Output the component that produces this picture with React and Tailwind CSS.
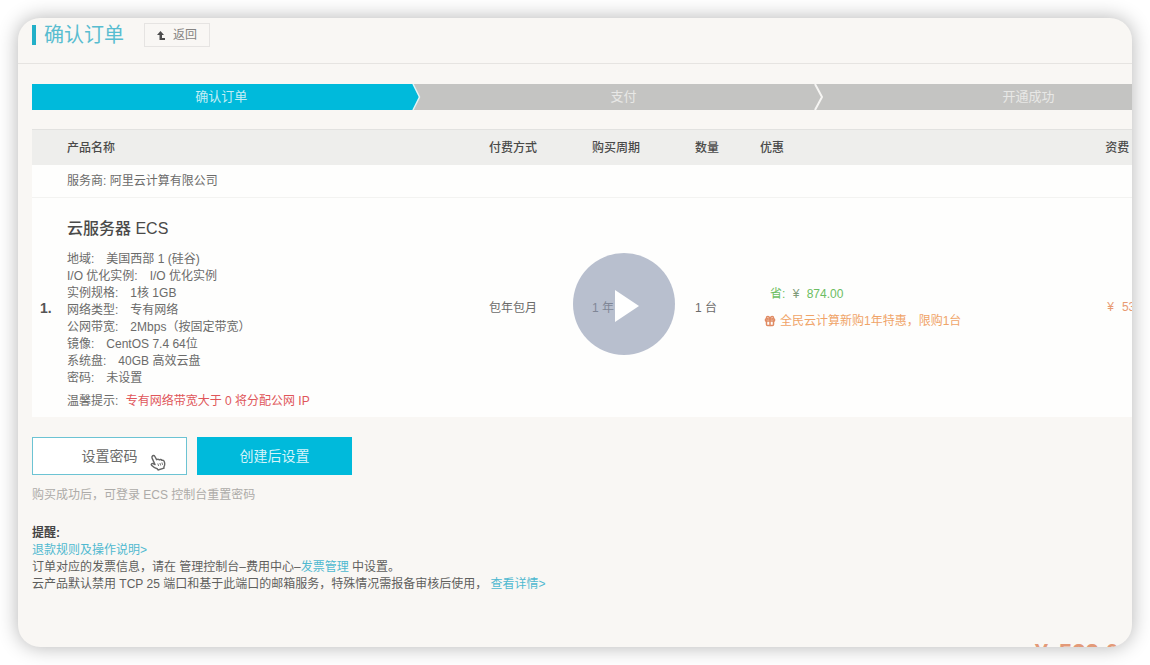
import React from "react";
import { Gift } from "lucide-react";

const details = [
  ["地域", "美国西部 1 (硅谷)"],
  ["I/O 优化实例", "I/O 优化实例"],
  ["实例规格", "1核 1GB"],
  ["网络类型", "专有网络"],
  ["公网带宽", "2Mbps（按固定带宽）"],
  ["镜像", "CentOS 7.4 64位"],
  ["系统盘", "40GB 高效云盘"],
  ["密码", "未设置"],
];

function Header() {
  return (
    <header className="flex shrink-0 items-center border-b border-[#e6e4e1] pt-[5px] pb-4 pl-[14px]">
      <span className="h-5 w-1 bg-[#22b0c8]" />
      <h1 className="ml-2 text-xl leading-6 text-[#58bdd0]">确认订单</h1>
      <button
        type="button"
        className="ml-5 flex h-6 items-center gap-2 border border-[#e6e4e2] px-3 text-[#858482]"
      >
        <svg className="h-[9px] w-2" viewBox="0 0 8 9" aria-hidden="true">
          <path d="M0 4L3.500 0L7 4H5V7H8V9H2.500V4Z" fill="#4c4c4c" />
        </svg>
        返回
      </button>
    </header>
  );
}

function Steps() {
  return (
    <ol className="mt-5 grid grid-cols-[390fr_402fr_407fr] bg-[#c4c4c2] text-[13px] leading-[26px]">
      <li className="flex text-[#c5eef6]">
        <span className="grow bg-[#00badb] text-center">确认订单</span>
        <svg className="h-[26px] w-3" viewBox="0 0 12 26" aria-hidden="true">
          <path d="M0 0H3L9 13L3 26H0Z" fill="#00badb" />
          <path d="M3 0L9.500 13L3 26" fill="none" stroke="#dff3f5" strokeWidth="1.500" />
        </svg>
      </li>
      <li className="flex pl-3 text-[#e8e8e6]">
        <span className="grow text-center">支付</span>
        <svg className="h-[26px] w-3" viewBox="0 0 12 26" aria-hidden="true">
          <path d="M2 0L9 13L2 26" fill="none" stroke="#f6f5f3" strokeWidth="2" />
        </svg>
      </li>
      <li className="text-center text-[#e8e8e6]">开通成功</li>
    </ol>
  );
}

function OrderTable() {
  return (
    <table className="mt-[19px] w-full table-fixed text-left text-[#6b6b6a]">
      <colgroup>
        <col className="w-[35px]" />
        <col className="w-[422px]" />
        <col className="w-[103px]" />
        <col className="w-[103px]" />
        <col className="w-[65px]" />
        <col />
        <col className="w-[127px]" />
      </colgroup>
      <thead className="border-t border-[#e2e2e0] bg-[#eeeeec] text-[#4a4a49]">
        <tr className="h-[35px]">
          <th scope="col" aria-label="序号" />
          <th scope="col" className="pt-[2px] font-medium">产品名称</th>
          <th scope="col" className="pt-[2px] font-medium">付费方式</th>
          <th scope="col" className="pt-[2px] font-medium">购买周期</th>
          <th scope="col" className="pt-[2px] font-medium">数量</th>
          <th scope="col" className="pt-[2px] font-medium">优惠</th>
          <th scope="col" className="pt-[2px] font-medium">资费</th>
        </tr>
      </thead>
      <tbody className="bg-[#fefefd]">
        <tr className="h-[33px] border-b border-[#f3f3f1]">
          <td />
          <td colSpan={6} className="pt-[2px]">服务商: 阿里云计算有限公司</td>
        </tr>
        <tr>
          <td className="pl-2 text-sm font-bold text-[#555]">1.</td>
          <td className="pt-[19px] pb-[7px]">
            <h2 className="text-base leading-6 font-medium text-[#4a4a49]">云服务器 ECS</h2>
            <dl className="mt-[10px]">
              {details.map(([name, value]) => (
                <div key={name} className="flex gap-3">
                  <dt>{name}:</dt>
                  <dd>{value}</dd>
                </div>
              ))}
            </dl>
            <p className="mt-[6px]">
              温馨提示: <span className="ml-1 text-[#e0565a]">专有网络带宽大于 0 将分配公网 IP</span>
            </p>
          </td>
          <td className="pt-[2px]">包年包月</td>
          <td className="pt-[2px]">1 年</td>
          <td className="pt-[2px]">1 台</td>
          <td className="leading-[27px]">
            <p className="pl-[10px] text-[#6cbd62]">
              省: <span className="mx-1 text-[#7f9a78]">¥</span> 874.00
            </p>
            <p className="flex items-center gap-1 pl-1 text-[#f0a468]">
              <Gift className="h-3 w-3 text-[#e08a62]" strokeWidth={3} />
              全民云计算新购1年特惠，限购1台
            </p>
          </td>
          <td className="text-[#e89a72]">
            <span className="mr-2 ml-[2px]">¥</span>532.00
          </td>
        </tr>
      </tbody>
    </table>
  );
}

function HandPointer() {
  return (
    <svg className="absolute top-4 right-5 h-[17px] w-4" viewBox="0 0 16 17" aria-hidden="true">
      <path
        d="M2.200 2.400C2.900 1.200 4.200 1.300 4.900 2.500L6.600 5.700C7.600 5 8.600 5.200 9.200 5.900C10.200 5.200 11.300 5.500 11.800 6.300C12.900 5.900 13.900 6.500 14.300 7.700C15 9.800 14.900 11.500 13.800 13.100L14.100 14.200L8 16L7.200 14.700C5.200 14.300 3.300 13 1.500 11.200C0.800 10.200 1.900 9.200 3 9.700L5 10.600L2.200 4.400C1.900 3.700 1.900 3 2.200 2.400Z"
        fill="#fff"
        stroke="#666"
        strokeWidth="1.400"
        strokeLinejoin="round"
      />
      <path d="M7.800 9.500L8.600 12M9.900 9L10.700 11.500M11.900 8.500L12.600 10.900" stroke="#777" strokeWidth="1" />
    </svg>
  );
}

function Actions() {
  return (
    <div className="mt-5 flex gap-[10px] text-sm">
      <button
        type="button"
        className="relative h-[38px] w-[155px] border border-[#6cc3d3] bg-white text-[#6b6b6a]"
      >
        设置密码
        <HandPointer />
      </button>
      <button type="button" className="h-[38px] w-[155px] bg-[#00badb] text-[#d5f4fa]">
        创建后设置
      </button>
    </div>
  );
}

function Notes() {
  return (
    <section className="mt-[21px] text-[#5f5f5d]">
      <h3 className="font-bold text-[#444]">提醒:</h3>
      <p>
        <a href="#refund" className="text-[#4fb9d0]">退款规则及操作说明&gt;</a>
      </p>
      <p>
        订单对应的发票信息，请在 管理控制台–费用中心–
        <a href="#invoice" className="text-[#4fb9d0]">发票管理</a> 中设置。
      </p>
      <p>
        云产品默认禁用 TCP 25 端口和基于此端口的邮箱服务，特殊情况需报备审核后使用，{" "}
        <a href="#details" className="text-[#4fb9d0]">查看详情&gt;</a>
      </p>
    </section>
  );
}

export default function App() {
  return (
    <div className="flex h-screen bg-white p-[18px] font-['Liberation_Sans','Noto_Sans_CJK_SC',sans-serif] text-xs leading-[17px]">
      <main className="relative flex min-w-0 grow flex-col overflow-hidden rounded-[22px] bg-[#f9f7f4] shadow-[0_0_20px_rgba(0,0,0,0.3)]">
        <Header />
        <div className="w-[109%] shrink-0 pl-[14px]">
          <Steps />
          <OrderTable />
          <Actions />
          <p className="mt-3 text-[#adaba8]">购买成功后，可登录 ECS 控制台重置密码</p>
          <Notes />
          <p className="mt-12 pr-[100px] text-right text-2xl leading-6 font-bold text-[#e39a78]">
            <span className="mr-1">¥</span> 532.00
          </p>
        </div>
        <button
          type="button"
          aria-label="播放"
          className="absolute top-[235px] left-[555px] flex h-[102px] w-[102px] items-center justify-center rounded-full bg-[#8c98b1]/62"
        >
          <svg className="mt-1 ml-[6px] h-8 w-6" viewBox="0 0 24 32" aria-hidden="true">
            <path d="M0 0L24 16L0 32Z" fill="#fff" />
          </svg>
        </button>
      </main>
    </div>
  );
}
